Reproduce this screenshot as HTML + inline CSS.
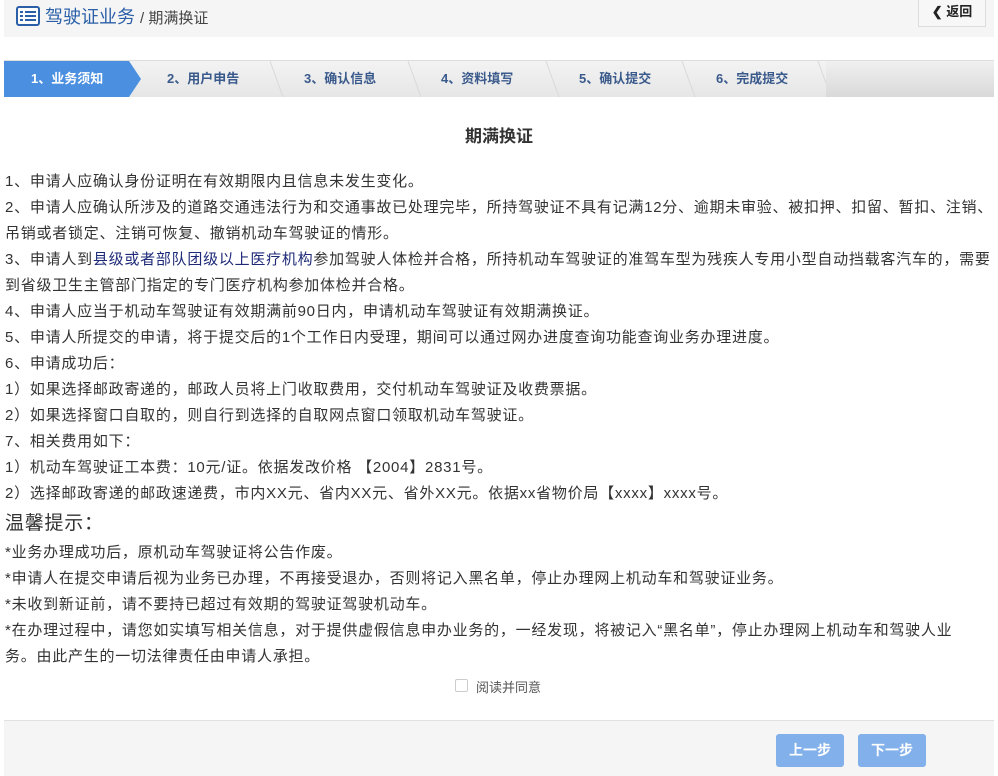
<!DOCTYPE html>
<html><head><meta charset="utf-8"><style>
*{margin:0;padding:0;box-sizing:border-box}
body{width:998px;height:776px;background:#fff;font-family:"Liberation Sans","Microsoft YaHei","Noto Sans CJK SC",sans-serif;color:#333;position:relative;overflow:hidden}
.hdr{position:absolute;left:4px;top:0;width:990px;height:37px;background:#f5f5f5}
.hdr .t{position:absolute;left:12px;top:3px;font-size:18px;color:#2b5fa8;white-space:nowrap}
.hdr .t small{font-size:15px;color:#444}
.back{position:absolute;left:914px;top:0;width:68px;height:27px;background:#f7f7f7;border:1px solid #ddd;border-top:none;font-size:13px;font-weight:bold;text-align:center;line-height:24px;color:#222}
.steps{position:absolute;left:4px;top:60px;width:990px;height:37px;background:linear-gradient(#f3f3f3,#e6e6e6);border-top:1px solid #ddd}
.st{position:absolute;top:0;height:36px;line-height:36px;font-size:13px;color:#3a5a8c;font-weight:bold}
.st1{left:0;width:125px;background:#4a8fe0;color:#fff;padding-left:27px}
.arr{position:absolute;left:125px;top:0;width:0;height:0;border-top:18px solid transparent;border-bottom:18px solid transparent;border-left:12px solid #4a8fe0}
.sep{position:absolute;top:0;width:1px;height:36px;background:#d8d8d8;transform:skewX(20deg)}
.title{position:absolute;top:122px;left:0;width:998px;text-align:center;font-size:17px;font-weight:bold;color:#333}
.txt{position:absolute;left:5px;top:169px;font-size:15px;letter-spacing:0.75px;line-height:26px;white-space:nowrap}
.txt b{font-weight:normal;color:#1e2a78}
.big{font-size:19px;line-height:33px}
.chk{position:absolute;left:455px;top:679px;width:13px;height:13px;border:1px solid #ccc;border-radius:2px}
.chkl{position:absolute;left:476px;top:677px;font-size:13px;color:#555}
.ftr{position:absolute;left:4px;top:720px;width:990px;height:56px;background:#f5f5f5;border-top:1px solid #e0e0e0}
.btn{position:absolute;top:734px;width:68px;height:33px;background:#82b0ea;border-radius:3px;color:#fff;font-size:14px;text-align:center;line-height:33px;font-weight:bold}
</style></head><body>
<div class="hdr"><div class="t"><svg width="24" height="20" viewBox="0 0 24 20" style="vertical-align:-3px"><rect x="1" y="1" width="22" height="18" rx="2" fill="#fff" stroke="#2b5fa8" stroke-width="2"/><rect x="4" y="5" width="3" height="2" fill="#2b5fa8"/><rect x="9" y="5" width="11" height="2" fill="#2b5fa8"/><rect x="4" y="9" width="3" height="2" fill="#2b5fa8"/><rect x="9" y="9" width="11" height="2" fill="#2b5fa8"/><rect x="4" y="13" width="3" height="2" fill="#2b5fa8"/><rect x="9" y="13" width="11" height="2" fill="#2b5fa8"/></svg> 驾驶证业务 <small>/ 期满换证</small></div><div class="back">❮ 返回</div></div>
<div class="steps">
<div class="st st1">1、业务须知</div><div class="arr"></div>
<div class="st" style="left:163px">2、用户申告</div>
<div class="sep" style="left:272px"></div>
<div class="st" style="left:300px">3、确认信息</div>
<div class="sep" style="left:410px"></div>
<div class="st" style="left:437px">4、资料填写</div>
<div class="sep" style="left:548px"></div>
<div class="st" style="left:575px">5、确认提交</div>
<div class="sep" style="left:684px"></div>
<div class="st" style="left:712px">6、完成提交</div>
<div class="sep" style="left:820px"></div>
<div style="position:absolute;left:822px;top:0;width:168px;height:36px;background:linear-gradient(#f0f0f0,#d9d9d9)"></div>
</div>
<div class="title">期满换证</div>
<div class="txt">
1、申请人应确认身份证明在有效期限内且信息未发生变化。<br>
2、申请人应确认所涉及的道路交通违法行为和交通事故已处理完毕，所持驾驶证不具有记满12分、逾期未审验、被扣押、扣留、暂扣、注销、<br>
吊销或者锁定、注销可恢复、撤销机动车驾驶证的情形。<br>
3、申请人到<b>县级或者部队团级以上医疗机构</b>参加驾驶人体检并合格，所持机动车驾驶证的准驾车型为残疾人专用小型自动挡载客汽车的，需要<br>
到省级卫生主管部门指定的专门医疗机构参加体检并合格。<br>
4、申请人应当于机动车驾驶证有效期满前90日内，申请机动车驾驶证有效期满换证。<br>
5、申请人所提交的申请，将于提交后的1个工作日内受理，期间可以通过网办进度查询功能查询业务办理进度。<br>
6、申请成功后：<br>
1）如果选择邮政寄递的，邮政人员将上门收取费用，交付机动车驾驶证及收费票据。<br>
2）如果选择窗口自取的，则自行到选择的自取网点窗口领取机动车驾驶证。<br>
7、相关费用如下：<br>
1）机动车驾驶证工本费：10元/证。依据发改价格 【2004】2831号。<br>
2）选择邮政寄递的邮政速递费，市内XX元、省内XX元、省外XX元。依据xx省物价局【xxxx】xxxx号。<br>
<div class="big">温馨提示：</div>
*业务办理成功后，原机动车驾驶证将公告作废。<br>
*申请人在提交申请后视为业务已办理，不再接受退办，否则将记入黑名单，停止办理网上机动车和驾驶证业务。<br>
*未收到新证前，请不要持已超过有效期的驾驶证驾驶机动车。<br>
*在办理过程中，请您如实填写相关信息，对于提供虚假信息申办业务的，一经发现，将被记入“黑名单”，停止办理网上机动车和驾驶人业<br>
务。由此产生的一切法律责任由申请人承担。
</div>
<div class="chk"></div><div class="chkl">阅读并同意</div>
<div class="ftr"></div>
<div class="btn" style="left:776px">上一步</div>
<div class="btn" style="left:858px">下一步</div>
</body></html>
